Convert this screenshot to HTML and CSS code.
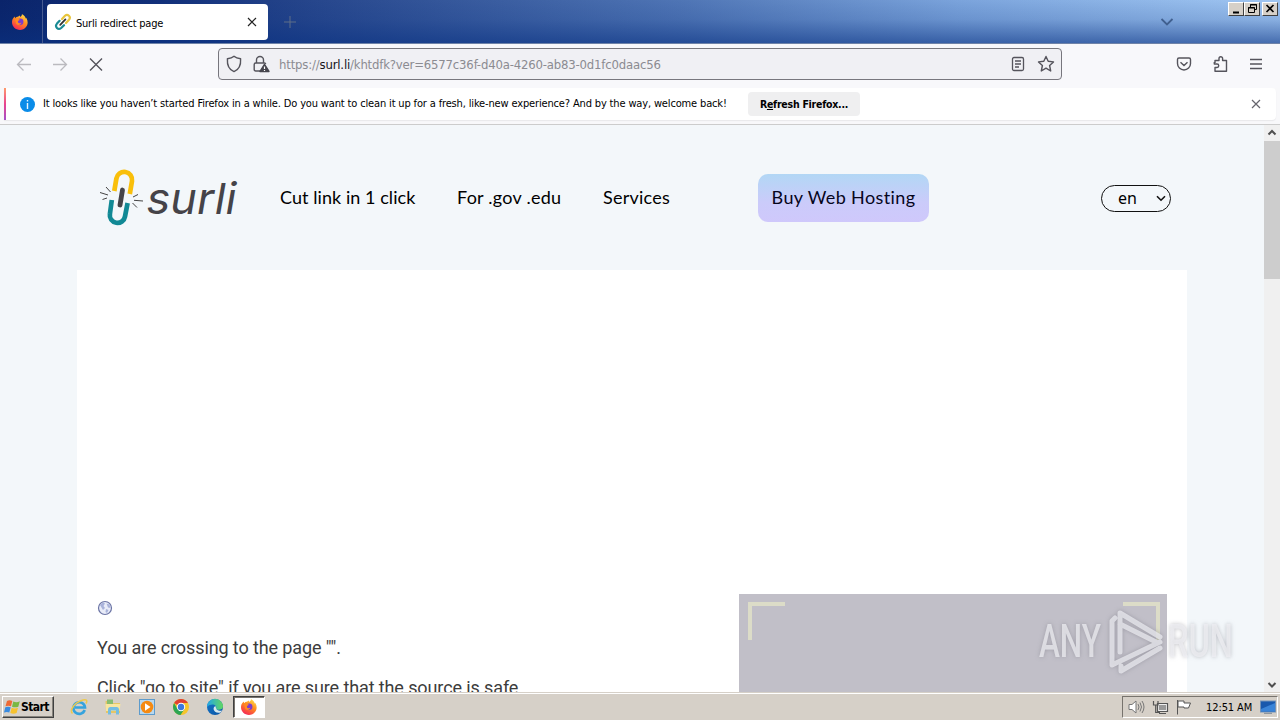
FILE: index.html
```
<!DOCTYPE html>
<html lang="en">
<head>
<meta charset="utf-8">
<title>Surli redirect page</title>
<link rel="stylesheet" href="styles.css">
</head>
<body>
<svg class="defs" width="0" height="0">
  <defs>
    <linearGradient id="flame" x1="0.8" y1="0" x2="0.25" y2="1"><stop offset="0" stop-color="#ffe14a"/><stop offset=".45" stop-color="#ff8a1e"/><stop offset="1" stop-color="#f5225a"/></linearGradient>
    <linearGradient id="edgeg" x1="0" y1="0" x2="1" y2="1"><stop offset="0" stop-color="#1577c8"/><stop offset="1" stop-color="#0b54a4"/></linearGradient>
    <linearGradient id="edgew" x1="0" y1="0" x2="1" y2="0"><stop offset="0" stop-color="#22a6e8"/><stop offset="1" stop-color="#62d860"/></linearGradient>
    <symbol id="firefox" viewBox="0 0 16 16">
      <path d="M1.2 4.2 2.6 2.6 3.2 4.2C4 3.3 5 2.8 6 2.8L7.6 1.4 8.4 3 10 1 9.8 0C12 1 13.4 3 13.8 4.6L14.4 4C16 7 16.2 10 14.2 12.8 12.6 15 10.2 16 8 16 3.6 16 0 12.6 0 8.3 0 6.7.4 5.2 1.2 4.2Z" fill="url(#flame)"/>
      <circle cx="8.2" cy="7.800" r="3.200" fill="#7a3bd0"/>
      <path d="M3.2 5.2C5 4.3 7 4.7 8 6 6.4 6.3 5.6 7.3 6 8.3 6.6 9.6 8.4 9.2 9.4 8.4 8.8 11.4 5.4 11.6 4 9.4Z" fill="#ff8a22"/>
    </symbol>
  </defs>
</svg>
<div class="screen">
  <header class="tabbar">
    <div class="fxbox"><svg width="16" height="16"><use href="#firefox"/></svg></div>
    <div class="tab">
      <svg width="18" height="18" viewBox="0 0 18 18" fill="none" stroke-linecap="round">
        <path d="M8 6 11 2.8C13.6.4 17.4 3.8 15 6.8L12 10" stroke="#e8c53c" stroke-width="2.2"/>
        <path d="M5.6 7.8 3 10.6C.4 13.6 4 17.6 7.2 15L10 12.2" stroke="#1a8a94" stroke-width="2.2"/>
        <path d="M6.2 11.8 11.4 6.4" stroke="#333" stroke-width="1.8"/>
      </svg>
      <span class="tab-title">Surli redirect page</span>
      <svg class="tab-x" width="10" height="10" viewBox="0 0 10 10"><path d="M1 1 9 9M9 1 1 9" stroke="#222" stroke-width="1.2"/></svg>
    </div>
    <svg class="plus" width="12" height="12" viewBox="0 0 12 12"><path d="M6 0V12M0 6H12" stroke="#5f6f88" stroke-width="1"/></svg>
    <svg class="alltabs" width="14" height="8" viewBox="0 0 14 8"><path d="M1.5 1 7 6.5 12.5 1" fill="none" stroke="#41608f" stroke-width="1.8"/></svg>
    <div class="winctl">
      <i><svg width="14" height="12"><path d="M4 9.5H10" stroke="#000" stroke-width="2"/></svg></i><i><svg width="14" height="12" fill="none" stroke="#000"><path d="M5.500 4V1.500H11.500V6.500H9.500M5 2H12M3.500 4.500H9.500V9.500H3.500ZM3 5H10"/></svg></i><i class="close"><svg width="14" height="12"><path d="M3.500 2 10.500 9M10.500 2 3.500 9" stroke="#000" stroke-width="1.700"/></svg></i>
    </div>
  </header>
  <nav class="toolbar">
    <svg class="nav" width="16" height="16" viewBox="0 0 16 16" fill="none" stroke="#bbbabf" stroke-width="1.300"><path d="M15 8.500H1.500M7.500 2.500 1.500 8.500 7.500 14.500"/></svg>
    <svg class="nav" width="16" height="16" viewBox="0 0 16 16" fill="none" stroke="#bbbabf" stroke-width="1.300"><path d="M1 8.500H14.500M8.500 2.500 14.500 8.500 8.500 14.500"/></svg>
    <svg class="nav" width="14" height="14" viewBox="0 0 14 14" stroke="#54535b" stroke-width="1.400"><path d="M1 1.500 13 13.500M13 1.500 1 13.500"/></svg>
    <div class="urlbar">
      <svg width="16" height="18" viewBox="0 0 16 18" fill="none" stroke="#55545c" stroke-width="1.400"><path d="M8 1.300C9.800 2.800 12 3.400 14.600 3.700 15 9.800 13 14.600 8 16.600 3 14.600 1 9.800 1.400 3.700 4 3.400 6.200 2.800 8 1.300Z" stroke-linejoin="round"/></svg>
      <svg class="lock" width="17" height="18" viewBox="0 0 17 18" fill="none" stroke="#55545c" stroke-width="1.400"><path d="M3.500 8V5A3.500 3.500 0 0 1 10.500 5V8M7 16H2.700Q1.200 16 1.200 14.500V9.500Q1.200 8 2.700 8H11.500Q12.500 8 12.700 9"/><path d="M11.500 9.500 16 16.500H7Z" fill="#46454d" stroke="#46454d" stroke-linejoin="round"/><path d="M11.500 11.500V14M11.500 15V16" stroke="#fff" stroke-width="1.200"/></svg>
      <span class="url">https://<b>surl.li</b>/khtdfk?ver=6577c36f-d40a-4260-ab83-0d1fc0daac56</span>
      <svg class="reader" width="14" height="16" viewBox="0 0 14 16" fill="none" stroke="#55545c" stroke-width="1.300"><rect x="1.500" y="1.500" width="11" height="13" rx="1.500"/><path d="M4 5H10M4 8H10M4 11H8"/></svg>
      <svg width="18" height="18" viewBox="0 0 18 18" fill="none" stroke="#55545c" stroke-width="1.400"><path d="M9 1.500 11.200 6.300 16.500 6.900 12.600 10.500 13.700 16 9 13.200 4.300 16 5.400 10.500 1.500 6.900 6.800 6.300Z" stroke-linejoin="round"/></svg>
    </div>
    <div class="tools">
      <svg width="16" height="16" viewBox="0 0 16 16" fill="none" stroke="#55545c" stroke-width="1.400"><path d="M3 2H13Q14.500 2 14.500 3.500V7.500A6.500 6.500 0 0 1 1.500 7.500V3.500Q1.500 2 3 2ZM4.500 6.200 8 9.500 11.500 6.200"/></svg>
      <svg width="16" height="18" viewBox="0 0 16 18" fill="none" stroke="#55545c" stroke-width="1.400"><path d="M3 8V5.500H7V3.500A1.800 1.800 0 0 1 10.600 3.500V5.500H14.500V16.300H3V12.500H5A1.700 1.700 0 0 0 5 9H2.300V7" stroke-linejoin="round"/></svg>
      <svg width="14" height="12" viewBox="0 0 14 12" stroke="#55545c" stroke-width="1.300"><path d="M1 1.500H13M1 6H13M1 10.500H13"/></svg>
    </div>
  </nav>
  <div class="noticewrap">
    <div class="notice">
      <svg width="15" height="15" viewBox="0 0 15 15"><circle cx="7.500" cy="7.500" r="7.500" fill="#0a8ce8"/><path d="M7.500 3V4.600M7.500 6V12" stroke="#e8f6ff" stroke-width="1.400"/></svg>
      <span class="msg">It looks like you haven’t started Firefox in a while. Do you want to clean it up for a fresh, like-new experience? And by the way, welcome back!</span>
      <div class="refresh"><span>R<u>e</u>fresh Firefox...</span></div>
      <svg class="dismiss" width="10" height="10" viewBox="0 0 10 10"><path d="M1 1 9 9M9 1 1 9" stroke="#66656d" stroke-width="1.200"/></svg>
    </div>
  </div>
  <div class="viewport">
    <main class="page">
      <div class="sitehead">
        <svg class="logo" width="140" height="60" viewBox="0 0 140 60" fill="none">
          <path d="M15.300 23 17.400 10.500A7.800 7.800 0 0 1 33 13L30.800 26" stroke="#f9bf0a" stroke-width="4.700"/>
          <path d="M12.800 32 10.900 46A7.600 7.600 0 0 0 26 48.500L28.600 35" stroke="#118995" stroke-width="4.700"/>
          <path d="M23.500 22 21 37" stroke="#454348" stroke-width="4.800" stroke-linecap="round"/>
          <path d="M7 19 11.500 24M1 24.500 9 27M3.500 31.500 8 30M34 29 39 26.500M35 32.300 44 33M33.500 35 38 39.500" stroke="#444" stroke-width="1"/>
          <text x="47.500" y="45.500" textLength="90" lengthAdjust="spacingAndGlyphs" class="wordmark">surli</text>
        </svg>
        <span class="link l1">Cut link in 1 click</span>
        <span class="link l2">For .gov .edu</span>
        <span class="link l3">Services</span>
        <div class="buy"><span>Buy Web Hosting</span></div>
        <div class="lang"><span>en</span><svg width="10" height="7" viewBox="0 0 10 7"><path d="M1 1.200 5 5.200 9 1.200" fill="none" stroke="#111" stroke-width="1.600"/></svg></div>
      </div>
      <section class="card">
        <div class="copy">
          <svg width="16" height="16" viewBox="0 0 16 16"><circle cx="8" cy="8" r="6.500" fill="#e9ecf8" stroke="#6b74a5" stroke-width="1.200"/><path d="M3 5 6 2.500 8 3.500 6.500 6 8 8 6 10 4.500 7.500ZM9.500 3.500 12.500 4.500 13.500 8 11 7.500ZM9 9 11.500 10 10 13 8.500 12Z" fill="#a9b3da"/></svg>
          <p>You are crossing to the page "".</p>
          <p class="second">Click "go to site" if you are sure that the source is safe</p>
        </div>
        <div class="preview"><i class="tl"></i><i class="tr"></i></div>
      </section>
    </main>
    <aside class="scroll">
      <svg width="16" height="16" viewBox="0 0 16 16"><path d="M4.500 9.500 8 6 11.500 9.500" fill="none" stroke="#505050" stroke-width="2"/></svg>
      <div class="thumb"></div>
      <svg class="down" width="16" height="16" viewBox="0 0 16 16"><path d="M4.500 6 8 9.500 11.500 6" fill="none" stroke="#505050" stroke-width="2"/></svg>
    </aside>
    <svg class="watermark" width="204" height="72" viewBox="0 0 204 72" fill="none">
      <g class="wmtext"><text x="3" y="53" textLength="62" lengthAdjust="spacingAndGlyphs">ANY</text><text x="132" y="53" textLength="65" lengthAdjust="spacingAndGlyphs">RUN</text></g>
      <path class="wmmark" d="M84 48V9L124 33M124 38 76 61V17L79 14M84 20 120 38M85 62V67L124 44" stroke-linejoin="round" stroke-linecap="round"/>
    </svg>
  </div>
  <footer class="taskbar">
    <div class="start"><svg width="17" height="16" viewBox="0 0 17 16"><path d="M3 2Q5.500.5 8.300 2L7 7.300Q4.500 6 1.500 7.300Z" fill="#ee6a35"/><path d="M9.300 2.500Q12.500 4 15.800 2.300L14.300 7.700Q11 9 8 7.700Z" fill="#79b842"/><path d="M1.300 8.300Q4 7 6.700 8.300L5.300 13.600Q3 12.300 0 13.600Z" fill="#398be0"/><path d="M7.700 8.800Q11 10 14 8.700L12.600 14Q9.500 15.500 6.300 14Z" fill="#f7c22e"/></svg><b>Start</b></div>
    <div class="quick">
      <svg width="18" height="18" viewBox="0 0 18 18" fill="none"><path d="M14.700 12A5.800 5.800 0 1 1 15 9.500H5" stroke="#36a3dd" stroke-width="2.600"/><path d="M2.500 15.500C-1 12 5 4 13 2 17 1 17.500 3 16 5.500" stroke="#edc94d" stroke-width="1.500"/></svg>
      <svg width="18" height="18" viewBox="0 0 18 18"><path d="M1.500 3H7L8 5H16V15H2Z" fill="#e5c665"/><path d="M3 1.500H9V6H3Z" fill="#88bd70"/><path d="M1.500 6H16.500L15.500 13H2Z" fill="#f8e6a0"/><path d="M4 16.500V11.500Q4 9 6 9H13Q15 9 15 11.500V16.500H12V12.500H7V16.500Z" fill="#74bde2"/></svg>
      <svg width="18" height="18" viewBox="0 0 18 18"><rect x="1.500" y="1.500" width="15" height="15" fill="#b8d8ef" stroke="#5d9bcc"/><circle cx="9" cy="9" r="6.300" fill="#f58a12"/><path d="M7 5.300 12.500 9 7 12.700Z" fill="#fff"/></svg>
      <svg width="18" height="18" viewBox="0 0 18 18"><circle cx="9" cy="9" r="8" fill="#f6c52c"/><path d="M9 9 2.100 5A8 8 0 0 1 15.900 5H9Z" fill="#df4032"/><path d="M2.100 5A8 8 0 0 0 8.500 17L12.500 11 9 9 5.500 11Z" fill="#2da553"/><circle cx="9" cy="9" r="4.200" fill="#fff"/><circle cx="9" cy="9" r="3.200" fill="#3b78df"/></svg>
      <svg width="18" height="18" viewBox="0 0 18 18"><circle cx="9" cy="9" r="8" fill="url(#edgeg)"/><path d="M1 9A8 8 0 0 1 17 8.500C17 12.500 10.500 12.500 10 10.500 11.500 7 5.500 4.500 1 9Z" fill="url(#edgew)"/><path d="M10 10Q11 13.500 16 12.500L14.500 14.500Q8.500 15.500 7.500 11Q7.500 8.500 9.500 8Z" fill="#d8e9ed"/></svg>
    </div>
    <div class="active"><svg width="16" height="16"><use href="#firefox"/></svg></div>
    <div class="tray">
      <svg width="17" height="16" viewBox="0 0 17 16" fill="#fff" stroke="#777" stroke-width="1"><path d="M1 5.500H4L8 2V14L4 10.500H1Z"/><path d="M10 5Q12 8 10 11M12 3.500Q15 8 12 12.500M14 2Q18 8 14 14" fill="none"/></svg>
      <svg width="17" height="16" viewBox="0 0 17 16" fill="#eee" stroke="#555" stroke-width="1.200"><path d="M5.500 4.500H15.500V12.500H5.500ZM7 14.500H14" /><path d="M1.500 2V6H6V2M3.700 6V13.500H8" fill="none"/><path d="M7 6H14V11H7Z" fill="#999" stroke="none"/></svg>
      <svg width="16" height="16" viewBox="0 0 16 16" fill="#fff" stroke="#555"><path d="M1.500 1V15.500M2 2H8V4H14.500L12.500 9H8V8H2Z"/></svg>
      <span class="clock">12:51 AM</span>
      <svg class="desk" width="16" height="14" viewBox="0 0 16 14"><rect x=".5" y="1" width="15" height="11" fill="#1858ad" stroke="#7291b7"/><path d="M1 9 15 3V11.500H1Z" fill="#3a84d8"/><path d="M4 13.300H12" stroke="#7c8795"/></svg>
    </div>
  </footer>
</div>
</body>
</html>
```
FILE: styles.css
```
* { box-sizing: border-box; }
body { margin: 0; font-family: "DejaVu Sans Condensed", "DejaVu Sans", sans-serif; color: #000; }
svg { display: block; flex: none; }
span, b { white-space: nowrap; }
.defs { position: absolute; }
.screen { width: 1280px; height: 720px; overflow: hidden; display: flex; flex-direction: column; }

.tabbar { position: relative; height: 44px; flex: none; display: flex; align-items: center; background: linear-gradient(to bottom, rgba(10,50,130,0), rgba(10,50,130,.15) 45%, rgba(10,50,130,.6)), linear-gradient(90deg, #0a246a 0, #12307a 160px, #27478d 320px, #4f75b5 680px, #7ba4dc 960px, #a0c6f2 1280px); border-bottom: 1px solid #6f83a8; }
.fxbox { width: 43px; height: 43px; display: flex; align-items: center; justify-content: center; border-right: 1px solid #465b91; padding-right: 2px; }
.tab { width: 221px; height: 36px; margin-left: 4px; border-radius: 4px; background: #fff; display: flex; align-items: center; padding: 0 11px 0 7px; margin-top: 1px; }
.tab-title { font-size: 11px; letter-spacing: -.22px; margin: 2px 0 0 4px; }
.tab-x { margin-left: auto; }
.plus { margin-left: 16px; margin-top: 1px; }
.alltabs { margin-left: auto; margin-right: 106px; }
.winctl { position: absolute; right: 2px; top: 2px; display: flex; }
.winctl i { width: 16px; height: 14px; background: #d6d0c8; border: 1px solid; border-color: #fff #404040 #404040 #fff; }
.winctl .close { margin-left: 2px; }

.toolbar { height: 44px; flex: none; background: #f8f8fb; display: flex; align-items: center; padding: 0 17px 4px 16px; }
.nav { margin-right: 20px; }
.nav:nth-child(3) { margin: 0 0 0 1px; }
.urlbar { width: 844px; height: 32px; margin-left: 115px; background: #f0f0f4; border: 1px solid #77767d; border-radius: 4px; display: flex; align-items: center; padding: 0 6px 0 7px; }
.lock { margin-left: 11px; }
.url { font-size: 13px; letter-spacing: -.18px; color: #8b8b91; margin-left: 9px; }
.url b { font-weight: 400; color: #15141a; }
.reader { margin-left: auto; margin-right: 12px; }
.tools { margin-left: auto; display: flex; align-items: center; gap: 20px; }
.tools svg:last-child { margin-left: 1px; }

.noticewrap { height: 37px; flex: none; background: #f8f8fa; border-bottom: 1px solid #ccc; padding: 0 4px; }
.notice { height: 32px; background: linear-gradient(#ff9a6c, #e9438e 50%, #a44fc8) left / 2px 100% no-repeat #fff; display: flex; align-items: center; padding: 0 15px 0 16px; border-radius: 0 4px 4px 0; box-shadow: 0 1px 1px #e8e8ea; }
.msg { width: 684px; font-size: 11px; letter-spacing: -.15px; margin: -2px 0 0 8px; }
.refresh { width: 112px; height: 24px; margin-left: 21px; border-radius: 4px; background: #efeff0; display: flex; align-items: center; justify-content: center; font-size: 10.5px; font-weight: 700; letter-spacing: -.25px; }
.dismiss { margin-left: auto; }

.viewport { position: relative; flex: 1; min-height: 0; display: flex; }
.page { width: 1264px; background: #f3f7fa; overflow: hidden; }
.sitehead { height: 145px; display: flex; align-items: center; padding-left: 99px; font-family: Lato, sans-serif; font-variant-ligatures: none; }
.logo { margin-right: 41px; }
.wordmark { font: italic 400 43px Inter, "Liberation Sans", sans-serif; fill: #454348; }
.link { font-size: 18px; margin-top: -2px; }
.l1 { width: 177px; letter-spacing: .06px; }
.l2 { width: 146px; letter-spacing: .24px; }
.l3 { width: 155px; letter-spacing: .24px; }
.buy { width: 171px; height: 48px; border-radius: 10px; background: linear-gradient(#b2d7f5, #cbcbfa 60%, #cfc8fb); display: flex; align-items: center; justify-content: center; font-size: 18px; letter-spacing: .38px; padding-bottom: 1px; color: #06061c; }
.lang { margin-left: 172px; margin-top: 1px; width: 70px; height: 27px; border: 1px solid #111; border-radius: 14px; display: flex; align-items: center; padding: 0 4px 0 16px; font: 16px "Noto Sans", sans-serif; justify-content: space-between; }
.lang span { margin-top: -1px; }
.card { width: 1110px; height: 430px; margin-left: 77px; background: #fff; padding: 324px 20px 0; display: flex; justify-content: space-between; font-family: Roboto, sans-serif; }
.copy { padding-top: 6px; font-size: 18px; letter-spacing: -.11px; color: #3c3c3c; }
.copy p { margin: 22px 0 0; line-height: 20px; white-space: nowrap; }
.copy .second { margin-top: 20px; }
.preview { width: 428px; height: 120px; background: #c1bfc8; padding: 8px 7px 0 9px; display: flex; justify-content: space-between; }
.preview i { width: 37px; height: 38px; border: solid #dcdcc8; }
.preview .tl { border-width: 4px 0 0 4px; }
.preview .tr { border-width: 4px 4px 0 0; }
.scroll { width: 16px; background: #f0f0f0; display: flex; flex-direction: column; }
.thumb { height: 138px; background: #cdcdcd; }
.down { margin-top: auto; }
.watermark { position: absolute; left: 1036px; top: 479px; filter: drop-shadow(0 0 2px rgba(110,110,120,.55)); }
.wmtext { font: 500 47px Roboto, sans-serif; fill: rgba(240,240,244,.72); }
.wmmark { stroke: rgba(235,235,240,.75); stroke-width: 5px; }

.taskbar { height: 27px; flex: none; background: #d6d0c8; border-top: 1px solid #fff; box-shadow: 0 -1px #d6d0c8; position: relative; display: flex; align-items: center; padding: 0 2px; font-size: 11px; }
.start { width: 52px; height: 22px; border: 1px solid; border-color: #fff #404040 #404040 #fff; box-shadow: inset -1px -1px #87837c; display: flex; align-items: center; padding-left: 1px; }
.start b { font-size: 12px; letter-spacing: -.6px; }
.quick { display: flex; gap: 16px; margin-left: 16px; }
.active { width: 32px; height: 22px; margin-left: 9px; background: #fff; border: 1px solid; border-color: #404040 #fff #fff #404040; box-shadow: inset 1px 1px #77736d; display: flex; align-items: center; justify-content: center; }
.tray { margin-left: auto; width: 156px; height: 22px; border: 1px solid; border-color: #77736d #fff #fff #77736d; display: flex; align-items: center; padding: 0 1px 0 5px; gap: 7px; }
.clock { margin-left: 7px; letter-spacing: -.1px; }
.desk { margin-left: auto; }
```
